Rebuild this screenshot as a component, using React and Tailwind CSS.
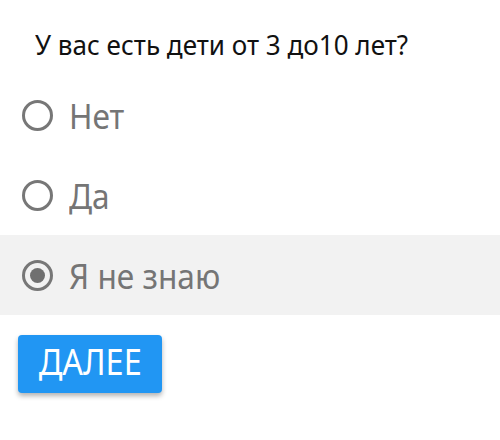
import { useState } from "react";

const options = ["Нет", "Да", "Я не знаю"];

function Radio({ checked }) {
  return (
    <span className="flex h-[31px] w-[31px] shrink-0 items-center justify-center rounded-full border-[3.5px] border-[#777777]">
      {checked && <span className="h-[15px] w-[15px] rounded-full bg-[#707070]" />}
    </span>
  );
}

export default function App() {
  const [value, setValue] = useState("Я не знаю");

  return (
    <div className="h-[440px] w-[500px] bg-white font-['Noto_Sans',sans-serif]">
      <div className="flex h-[75px] items-center pl-[35px] pt-[12px]">
        <span className="inline-block origin-left scale-x-[0.93] whitespace-nowrap text-[28px] text-[#111111]">
          У вас есть дети от 3 до10 лет?
        </span>
      </div>

      <div>
        {options.map((opt) => (
          <label
            key={opt}
            onClick={() => setValue(opt)}
            className={`flex h-[80px] cursor-pointer items-center gap-[16px] pl-[22px] ${
              value === opt ? "bg-[#f2f2f2]" : ""
            }`}
          >
            <Radio checked={value === opt} />
            <span className="inline-block origin-left scale-x-[0.93] whitespace-nowrap pt-[1px] text-[34px] leading-none text-[#757575]">
              {opt}
            </span>
          </label>
        ))}
      </div>

      <div className="pl-[18px] pt-[20px]">
        <button className="flex h-[58px] w-[144px] items-center justify-center rounded-[4px] bg-[#2196f3] pb-[4px] text-white shadow-[0_3px_5px_rgba(0,0,0,0.3)]">
          <span className="inline-block scale-x-[0.9] text-[36px] leading-none">ДАЛЕЕ</span>
        </button>
      </div>
    </div>
  );
}
